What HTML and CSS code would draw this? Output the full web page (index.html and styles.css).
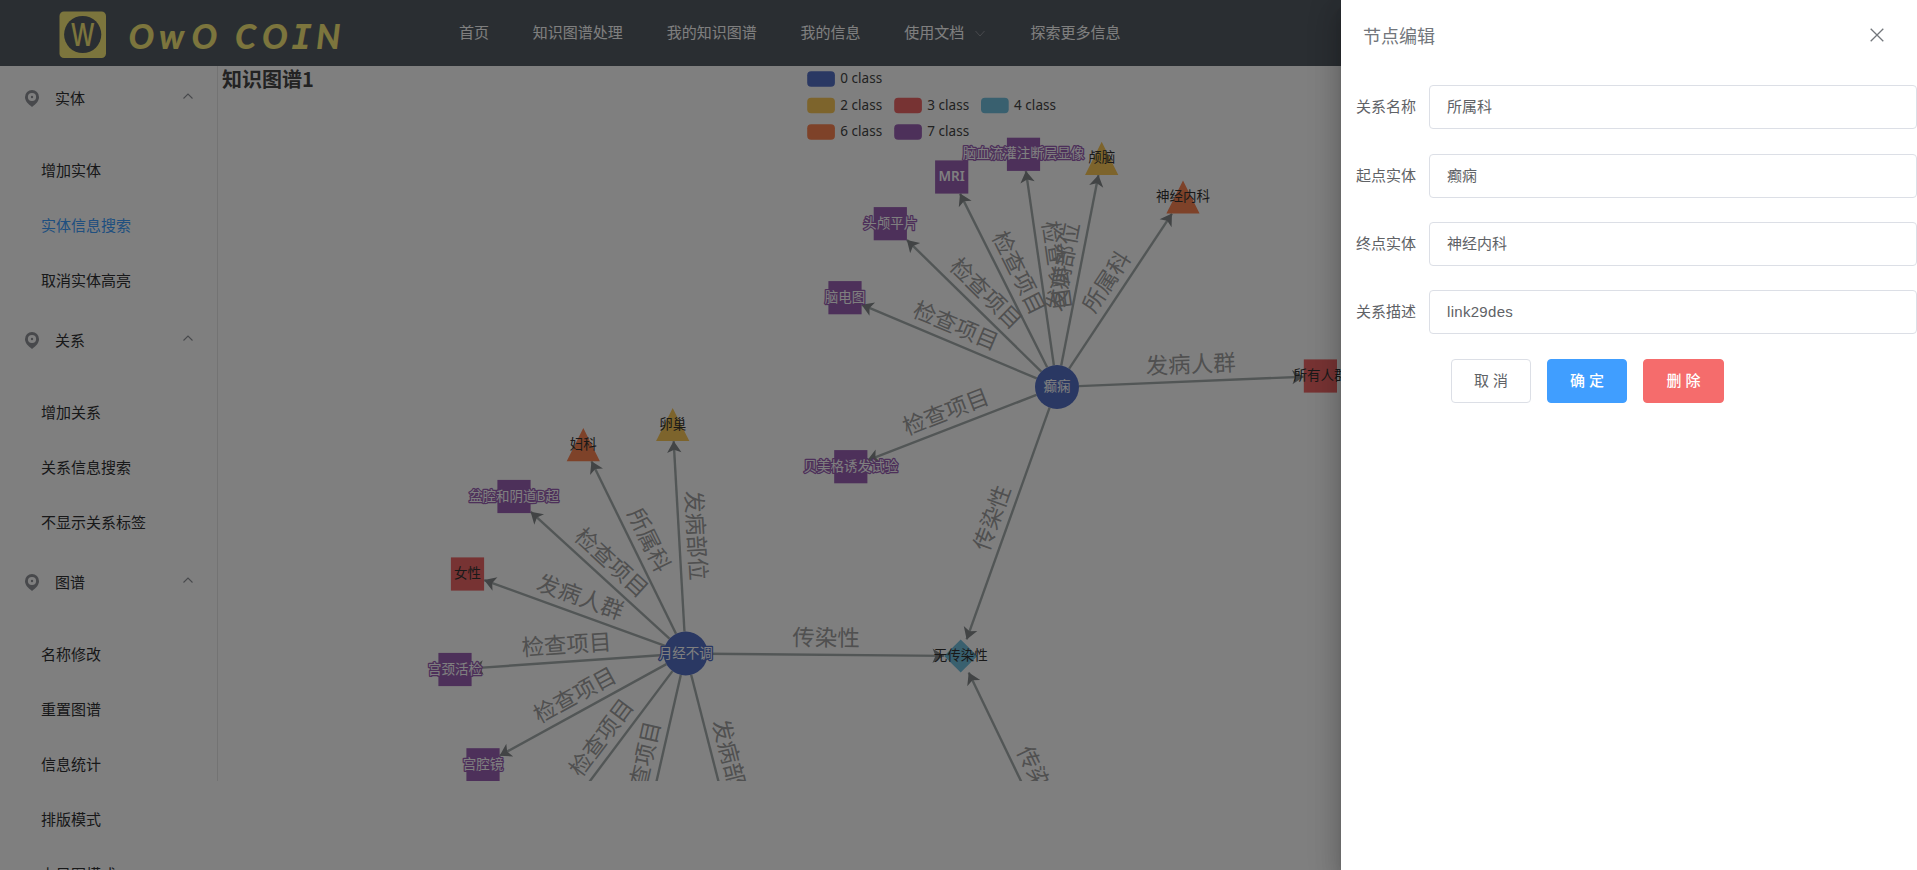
FILE: index.html
```html
<!DOCTYPE html>
<html lang="zh-CN">
<head>
<meta charset="utf-8">
<title>知识图谱</title>
<link rel="stylesheet" href="styles.css">
</head>
<body>
<header class="topbar">
  <svg class="logo" width="300" height="66" viewBox="0 0 300 66">
    <rect class="logo-fill" x="9.5" y="11.5" width="46.5" height="46.5" rx="4.5"/>
    <circle class="logo-hole" cx="32.7" cy="34.5" r="18.6"/>
    <text class="logo-w" x="32.7" y="46" text-anchor="middle" textLength="24" lengthAdjust="spacingAndGlyphs">W</text>
    <text class="logo-text" y="49" x="78.5 109 141.500 185 212"><tspan>OwOCO</tspan></text>
    <text class="logo-text logo-serif" y="49" x="241.500">I</text>
    <text class="logo-text" y="49" x="266">N</text>
  </svg>
  <nav class="nav">
    <span>首页</span><span>知识图谱处理</span><span>我的知识图谱</span><span>我的信息</span>
    <span class="nav-sub">使用文档<svg width="10" height="7" viewBox="0 0 10 7"><path d="M.5 1 5 6 9.500 1"/></svg></span>
    <span>探索更多信息</span>
  </nav>
</header>
<div class="body">
  <aside class="side">
    <section class="group">
      <h3 class="group-title"><svg class="pin" width="14" height="17" viewBox="0 0 14 17"><path d="M7 0a7 7 0 0 1 7 7c0 4-3 7-7 10C3 14 0 11 0 7a7 7 0 0 1 7-7z"/><circle class="pin-hole" cx="7" cy="7" r="4.100"/><circle cx="7" cy="7" r="1.200"/></svg><span>实体</span><svg class="caret" width="10" height="7" viewBox="0 0 10 7"><path d="M.5 5.500 5 1 9.500 5.500"/></svg></h3>
      <ul><li>增加实体</li><li class="active">实体信息搜索</li><li>取消实体高亮</li></ul>
    </section>
    <section class="group">
      <h3 class="group-title"><svg class="pin" width="14" height="17" viewBox="0 0 14 17"><path d="M7 0a7 7 0 0 1 7 7c0 4-3 7-7 10C3 14 0 11 0 7a7 7 0 0 1 7-7z"/><circle class="pin-hole" cx="7" cy="7" r="4.100"/><circle cx="7" cy="7" r="1.200"/></svg><span>关系</span><svg class="caret" width="10" height="7" viewBox="0 0 10 7"><path d="M.5 5.500 5 1 9.500 5.500"/></svg></h3>
      <ul><li>增加关系</li><li>关系信息搜索</li><li>不显示关系标签</li></ul>
    </section>
    <section class="group">
      <h3 class="group-title"><svg class="pin" width="14" height="17" viewBox="0 0 14 17"><path d="M7 0a7 7 0 0 1 7 7c0 4-3 7-7 10C3 14 0 11 0 7a7 7 0 0 1 7-7z"/><circle class="pin-hole" cx="7" cy="7" r="4.100"/><circle cx="7" cy="7" r="1.200"/></svg><span>图谱</span><svg class="caret" width="10" height="7" viewBox="0 0 10 7"><path d="M.5 5.500 5 1 9.500 5.500"/></svg></h3>
      <ul><li>名称修改</li><li>重置图谱</li><li>信息统计</li><li>排版模式</li><li>力导图模式</li></ul>
    </section>
  </aside>
  <main class="chart">
    <svg id="graph" width="1699" height="715" viewBox="218 66 1699 715"></svg>
  </main>
</div>
<div class="mask"></div>
<section class="drawer">
  <header class="drawer-head"><span>节点编辑</span><svg width="14" height="14" viewBox="0 0 14 14"><path d="M.7.7l12.600 12.600M13.300.7.7 13.300"/></svg></header>
  <form class="form">
    <label class="row"><span>关系名称</span><input value="所属科"></label>
    <label class="row"><span>起点实体</span><input value="癫痫"></label>
    <label class="row"><span>终点实体</span><input value="神经内科"></label>
    <label class="row"><span>关系描述</span><input class="latin" value="link29des"></label>
    <div class="actions">
      <button type="button" class="btn">取 消</button>
      <button type="button" class="btn primary">确 定</button>
      <button type="button" class="btn danger">删 除</button>
    </div>
  </form>
</section>
<script src="graph.js"></script>
</body>
</html>
```
FILE: styles.css
```css
* { box-sizing: border-box; }
body {
  margin: 0;
  height: 870px;
  overflow: hidden;
  position: relative;
  background: #fff;
  font-family: "Liberation Sans", "Noto Sans CJK SC", sans-serif;
  font-size: 15px;
  color: #303133;
}
.topbar { display: flex; align-items: center; height: 66px; padding-left: 50px; background: #545c64; }
.logo { flex: none; }
.logo-fill { fill: #f8ea7a; }
.logo-hole { fill: #545c64; }
.logo-w { font: 500 31px Inter, sans-serif; fill: #f8ea7a; }
.logo-text { font: italic 900 34px Lato, sans-serif; fill: #f8ea7a; }
.logo-serif { font: italic bold 34px "DejaVu Sans Mono", monospace; }
.nav { display: flex; gap: 43.800px; margin-left: 109px; color: #fff; line-height: 22px; white-space: nowrap; }
.nav-sub { display: flex; align-items: center; gap: 11px; margin-right: 1.500px; }
.nav-sub svg { fill: none; stroke: #909399; stroke-width: 1; }
.body { display: flex; height: 804px; }
.side { width: 218px; height: 715px; flex: none; border-right: 1px solid #e6e6e6; }
.group-title { display: flex; align-items: center; height: 64px; margin: 0 0 13px; padding: 0 24px 0 25px; font-size: 15px; font-weight: 400; }
.group-title span { margin-left: 16px; flex: 1; padding-bottom: 1px; }
.pin { fill: #909399; }
.pin-hole { fill: #fff; }
.caret { fill: none; stroke: #909399; stroke-width: 1.100; margin-bottom: 4px; }
.side ul { list-style: none; margin: 0; padding: 0 0 0 41px; }
.side li { height: 55px; line-height: 55px; white-space: nowrap; }
.side .active { color: #409eff; }
.chart { flex: none; height: 715px; overflow: hidden; }
.chart svg { display: block; }
.chart-title { font: bold 20px "Noto Sans CJK SC", sans-serif; fill: #464646; }
.legend { font: 13.500px "Noto Sans", sans-serif; fill: #444; }
.edge { stroke: #a5adad; stroke-width: 2.400; }
.arrow { fill: #84898b; }
.edge-label { font: 22.500px "Noto Sans CJK SC", sans-serif; fill: #a0a0a0; text-anchor: middle; }
.node-label { font: 13.500px "Noto Sans CJK SC", sans-serif; text-anchor: middle; fill: #333; }
.node-label.light { fill: #fff; stroke-width: 2.500px; paint-order: stroke; stroke-linejoin: round; }
.node-label.latin { font: 600 13.500px "Noto Sans", sans-serif; }
.mask { position: absolute; inset: 0; background: rgba(0, 0, 0, .5); }
.drawer {
  position: absolute;
  top: 0;
  right: 0;
  width: 576px;
  height: 870px;
  background: #fff;
  box-shadow: 0 8px 10px -5px rgba(0, 0, 0, .2), 0 16px 24px 2px rgba(0, 0, 0, .14), 0 6px 30px 5px rgba(0, 0, 0, .12);
}
.drawer-head { display: flex; justify-content: space-between; align-items: center; height: 70px; padding: 0 33px 0 22px; color: #72767b; font-size: 18px; }
.drawer-head svg { fill: none; stroke: #72767b; stroke-width: 1.300; }
.form { display: flex; flex-direction: column; gap: 24.400px; padding-top: 15.200px; color: #606266; }
.row { display: flex; align-items: center; height: 44px; padding-left: 15px; }
.row span { width: 73px; flex: none; padding-bottom: 3px; }
.row input { flex: 1; min-width: 0; height: 44px; border: 1px solid #dcdfe6; border-radius: 4px; padding: 0 17px 3px; font: inherit; color: #606266; background: #fff; }
.row .latin { letter-spacing: .3px; padding-bottom: 1px; }
.actions { display: flex; gap: 16px; padding-left: 110px; }
.btn { width: 80px; height: 44px; border: 1px solid #dcdfe6; border-radius: 4px; background: #fff; color: #606266; font: 15px "Liberation Sans", "Noto Sans CJK SC", sans-serif; padding: 0 0 3px; }
.primary { background: #409eff; border-color: #409eff; color: #fff; font-weight: 500; }
.danger { width: 81px; background: #f56c6c; border-color: #f56c6c; color: #fff; font-weight: 500; }
```
FILE: graph.js
```js
const palette = { 0: '#5470c6', 2: '#fac858', 3: '#ee6666', 4: '#73c0de', 6: '#fc8452', 7: '#9a60b4' };
const nodes = {
  dx: [1057, 387, 0, '癫痫'],
  nx: [1023.5, 154.3, 7, '脑血流灌注断层显像'],
  mri: [951.7, 177, 7, 'MRI'],
  ln: [1101.7, 158.3, 2, '颅脑'],
  sj: [1183, 197, 6, '神经内科'],
  tl: [890.3, 223.7, 7, '头颅平片'],
  nd: [845, 297.7, 7, '脑电图'],
  sy: [1320.4, 376, 3, '所有人群'],
  bm: [850.8, 466.7, 7, '贝美格诱发试验'],
  yj: [685.7, 653.5, 0, '月经不调'],
  lc: [672.7, 424.5, 2, '卵巢'],
  fk: [583.3, 444.7, 6, '妇科'],
  pq: [514, 496.5, 7, '盆腔和阴道B超'],
  nv: [467.5, 574, 3, '女性'],
  gj: [455, 669.5, 7, '宫颈活检'],
  gq: [483, 764.8, 7, '宫腔镜'],
  wc: [960.7, 656, 4, '无传染性'],
  o1: [545, 841, 7, ''],
  o2: [634, 880, 7, ''],
  o3: [743, 877, 2, ''],
  o4: [1087, 918, 0, '']
};
const edges = [
  ['dx', 'nx', '检查项目'], ['dx', 'mri', '检查项目'], ['dx', 'ln', '发病部位'], ['dx', 'sj', '所属科'],
  ['dx', 'tl', '检查项目'], ['dx', 'nd', '检查项目'], ['dx', 'sy', '发病人群'], ['dx', 'bm', '检查项目'],
  ['dx', 'wc', '传染性'], ['yj', 'wc', '传染性'], ['yj', 'lc', '发病部位'], ['yj', 'fk', '所属科'],
  ['yj', 'pq', '检查项目'], ['yj', 'nv', '发病人群'], ['yj', 'gj', '检查项目'], ['yj', 'gq', '检查项目'],
  ['yj', 'o1', '检查项目'], ['yj', 'o2', '检查项目'], ['yj', 'o3', '发病部位'], ['o4', 'wc', '传染性']
];
const half = 16.6, radius = 22;
let lines = '', labels = '', shapes = '', names = '';

for (const [a, b, text] of edges) {
  const [ax, ay] = nodes[a], [bx, by] = nodes[b];
  const len = Math.hypot(bx - ax, by - ay);
  const ux = (bx - ax) / len, uy = (by - ay) / len;
  const back = half / Math.max(Math.abs(ux), Math.abs(uy));
  const sx = ax + ux * radius, sy = ay + uy * radius;
  const ex = bx - ux * back, ey = by - uy * back;
  lines += `<line class="edge" x1="${sx}" y1="${sy}" x2="${ex}" y2="${ey}"/>`;
  const deg = Math.atan2(uy, ux) * 180 / Math.PI;
  lines += `<path class="arrow" transform="translate(${ex} ${ey}) rotate(${deg})" d="M0 0-11.600-7.200-8.600 0-11.600 7.200z"/>`;
  const turn = deg > 90 ? deg - 180 : deg < -90 ? deg + 180 : deg;
  labels += `<text class="edge-label" transform="translate(${(sx + ex) / 2} ${(sy + ey) / 2}) rotate(${turn})" y="-9">${text}</text>`;
}
for (const [x, y, cls, name] of Object.values(nodes)) {
  const fill = palette[cls];
  if (cls === 0) shapes += `<circle cx="${x}" cy="${y}" r="${radius}" fill="${fill}"/>`;
  else if (cls === 2 || cls === 6) shapes += `<path d="M${x} ${y - half}l${half} ${half * 2}h${-half * 2}z" fill="${fill}"/>`;
  else if (cls === 4) shapes += `<path d="M${x} ${y - half}l${half} ${half}l${-half} ${half}l${-half} ${-half}z" fill="${fill}"/>`;
  else shapes += `<rect x="${x - half}" y="${y - half}" width="${half * 2}" height="${half * 2}" fill="${fill}"/>`;
  const light = cls === 0 || cls === 7;
  const kind = (light ? ' light' : '') + (name === 'MRI' ? ' latin' : '');
  if (name) names += `<text class="node-label${kind}"${light ? ` stroke="${fill}"` : ''} x="${x}" y="${y + 4}">${name}</text>`;
}
const legend = [[0, 807.2, 79], [2, 807.2, 105.5], [3, 894.2, 105.5], [4, 981, 105.5], [6, 807.2, 132], [7, 894.2, 132]];
const keys = legend.map(([c, x, y]) =>
  `<rect x="${x}" y="${y - 7.8}" width="27.700" height="15.600" rx="4" fill="${palette[c]}"/><text class="legend" x="${x + 33}" y="${y + 4}" textLength="42">${c} class</text>`).join('');
document.getElementById('graph').innerHTML =
  lines + labels + shapes + names + keys + '<text class="chart-title" x="222" y="86.500">知识图谱1</text>';
```
